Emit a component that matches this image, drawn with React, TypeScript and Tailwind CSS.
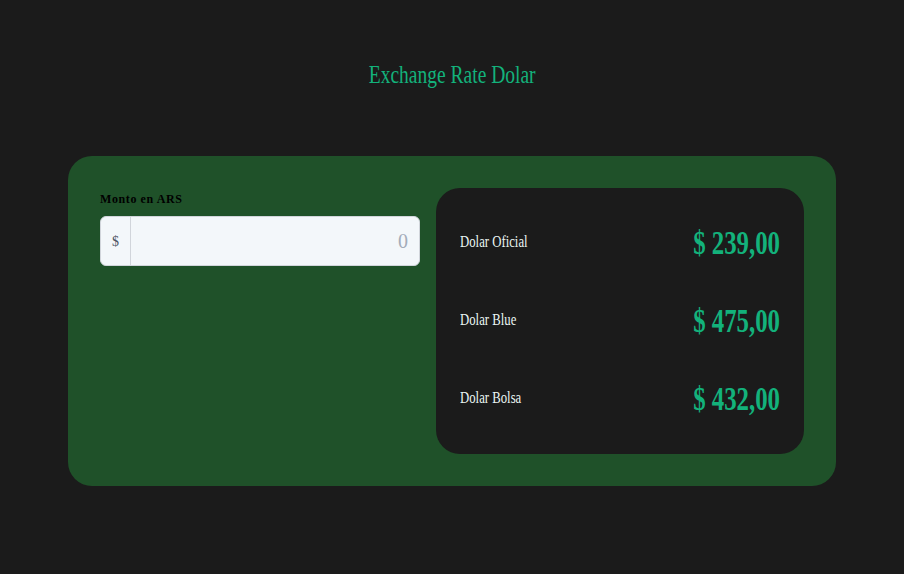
const rates = [
  { name: "Dolar Oficial", value: "239,00" },
  { name: "Dolar Blue", value: "475,00" },
  { name: "Dolar Bolsa", value: "432,00" },
];

const App = () => {
  return (
    <div
      className="min-h-screen w-full bg-[#1b1b1b] flex flex-col items-center"
      style={{ fontFamily: '"Liberation Serif", "Times New Roman", serif' }}
    >
      <h1 className="mt-[59px] h-[32px] text-[26px] leading-[32px] text-[#13b27b] scale-x-[0.75] origin-center">
        Exchange Rate Dolar
      </h1>

      <div className="mt-[65px] w-[768px] h-[330px] rounded-[24px] bg-[#1f5129] p-8 flex gap-4">
        <div className="w-[320px] flex flex-col">
          <label className="text-[12px] font-bold text-black tracking-[0.6px] leading-[20px] mt-[1px] mb-[7px]">
            Monto en ARS
          </label>
          <div className="h-[50px] flex rounded-[6px] border border-[#d1d5db] bg-[#f3f7fa] overflow-hidden">
            <span className="w-[30px] border-r border-[#d1d5db] flex items-center justify-center text-[14px] text-[#4b5563]">
              $
            </span>
            <input
              type="text"
              placeholder="0"
              className="flex-1 min-w-0 bg-transparent text-right pr-[11px] text-[20px] text-[#111827] placeholder:text-[#a3acb9] outline-none"
            />
          </div>
        </div>

        <div className="w-[368px] rounded-[24px] bg-[#1b1b1b] px-6 py-[15px] flex flex-col">
          {rates.map((r) => (
            <div key={r.name} className="h-[78px] flex items-center justify-between">
              <span className="block text-[17px] text-[#eaf6f3] scale-x-[0.75] origin-left whitespace-nowrap">
                {r.name}
              </span>
              <span className="block text-[34px] font-bold text-[#13b27b] scale-x-[0.73] origin-right whitespace-nowrap">
                $ {r.value}
              </span>
            </div>
          ))}
        </div>
      </div>
    </div>
  );
};

export default App;
